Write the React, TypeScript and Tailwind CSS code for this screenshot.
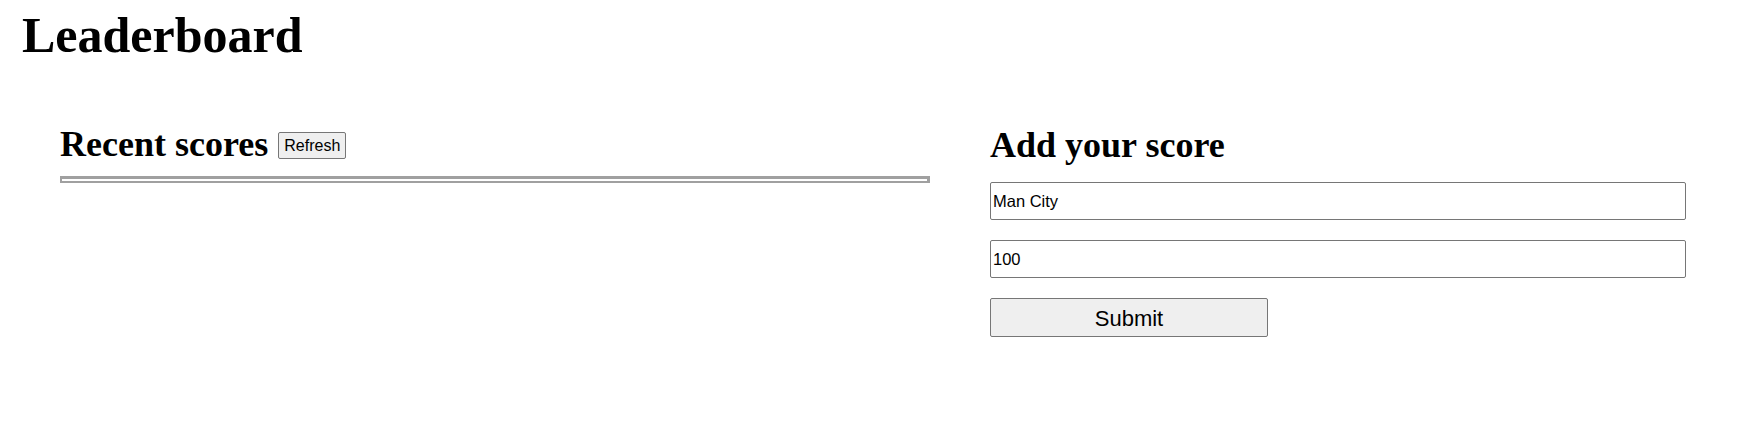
import React from "react";

export default function App() {
  return (
    <div className="min-h-[423px] w-[1737px] bg-white text-black font-['Liberation_Serif',serif]">
      <h1 className="pl-[22px] pt-[10px] text-[50px] font-bold leading-none">Leaderboard</h1>
      <div className="flex pl-[60px] pt-[66px]">
        <section className="w-[870px]">
          <div className="flex items-start">
            <h2 className="text-[36px] font-bold leading-none">Recent scores</h2>
            <button className="ml-[10px] mt-[6px] h-[27px] rounded-[2px] border border-[#767676] bg-[#efefef] px-[5px] font-['Liberation_Sans',sans-serif] text-[16px] leading-none text-black">
              Refresh
            </button>
          </div>
          <div className="mt-[14px] h-[7px] border-t-[3px] border-b-2 border-l-2 border-r-[3px] border-[#a0a0a0] bg-white" />
        </section>
        <section className="ml-[60px] w-[696px]">
          <h2 className="mt-[1px] text-[36px] font-bold leading-none">Add your score</h2>
          <form className="mt-[19px] flex flex-col font-['Liberation_Sans',sans-serif]" onSubmit={(e) => e.preventDefault()}>
            <input
              defaultValue="Man City"
              className="h-[38px] w-[696px] rounded-[2px] border border-[#767676] bg-white px-[2px] text-[16.5px] text-black outline-none"
            />
            <input
              defaultValue="100"
              className="mt-[20px] h-[38px] w-[696px] rounded-[2px] border border-[#767676] bg-white px-[2px] text-[16.5px] text-black outline-none"
            />
            <button
              type="submit"
              className="mt-[20px] h-[39px] w-[278px] rounded-[2px] border border-[#767676] bg-[#efefef] pt-[3px] text-[22px] leading-none text-black"
            >
              Submit
            </button>
          </form>
        </section>
      </div>
    </div>
  );
}
